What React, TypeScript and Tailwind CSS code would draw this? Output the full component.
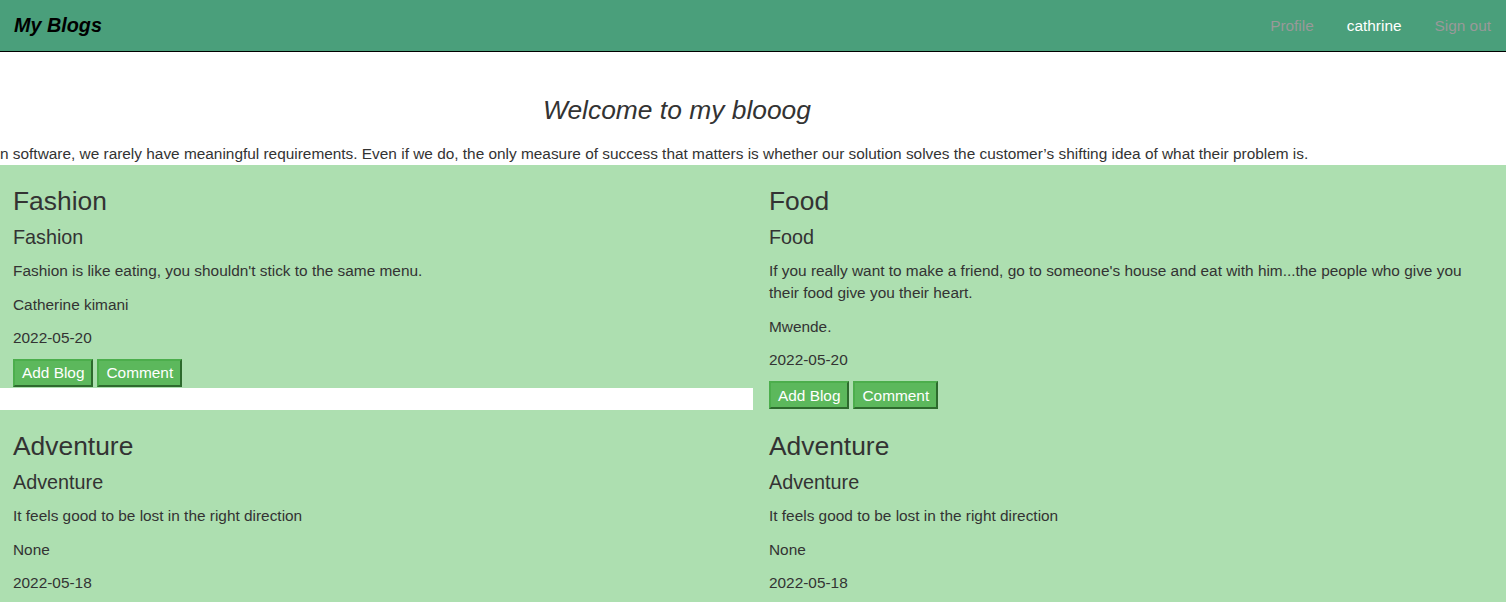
const posts = [
  {
    category: "Fashion",
    title: "Fashion",
    body: "Fashion is like eating, you shouldn't stick to the same menu.",
    author: "Catherine kimani",
    date: "2022-05-20",
  },
  {
    category: "Food",
    title: "Food",
    body: "If you really want to make a friend, go to someone's house and eat with him...the people who give you their food give you their heart.",
    author: "Mwende.",
    date: "2022-05-20",
  },
  {
    category: "Adventure",
    title: "Adventure",
    body: "It feels good to be lost in the right direction",
    author: "None",
    date: "2022-05-18",
  },
  {
    category: "Adventure",
    title: "Adventure",
    body: "It feels good to be lost in the right direction",
    author: "None",
    date: "2022-05-18",
  },
];

function BlogCard({ post, right }: { post: (typeof posts)[number]; right: boolean }) {
  return (
    <div className={`bg-[#addfb0] pt-[22px] self-start ${right ? "pl-[16px] pr-[13px]" : "pl-[13px] pr-[13px]"}`}>
      <h1 className="text-[26.4px] leading-[28.6px] mb-[10px]">{post.category}</h1>
      <h2 className="text-[19.8px] leading-[22px] mb-[12px]">{post.title}</h2>
      <p className="text-[15.4px] leading-[22.5px] mb-[10.5px]">{post.body}</p>
      <p className="text-[15.4px] leading-[23px] mb-[10px]">{post.author}</p>
      <p className="text-[15.4px] leading-[23px] mb-[10px]">{post.date}</p>
      <div className="flex gap-[4px] h-[29px]">
        <button className="h-[28px] px-[7px] bg-[#5cb85c] text-white text-[15.4px] border-2 border-t-[#4cae4c] border-l-[#4cae4c] border-r-[#2d6a2d] border-b-[#2d6a2d]">
          Add Blog
        </button>
        <button className="h-[28px] px-[7px] bg-[#5cb85c] text-white text-[15.4px] border-2 border-t-[#4cae4c] border-l-[#4cae4c] border-r-[#2d6a2d] border-b-[#2d6a2d]">
          Comment
        </button>
      </div>
    </div>
  );
}

export default function App() {
  return (
    <div className="min-h-screen bg-white text-[#333] font-['Liberation_Sans',Arial,sans-serif]">
      <nav className="h-[52px] bg-[#4a9f7b] border-b border-black flex items-center justify-between">
        <a className="pl-[14px] text-[19.8px] font-bold italic text-black">My Blogs</a>
        <ul className="flex gap-[33px] pr-[15px] text-[15.4px]">
          <li className="text-[#999]">Profile</li>
          <li className="text-white">cathrine</li>
          <li className="text-[#999]">Sign out</li>
        </ul>
      </nav>

      <section className="pt-[42px]">
        <h2 className="w-[1354px] text-[26.4px] italic text-center leading-[32px]">Welcome to my blooog</h2>
        <p className="mt-[17px] text-[15.4px] leading-[22px] whitespace-nowrap">
          n software, we rarely have meaningful requirements. Even if we do, the only measure of success that matters is whether our solution solves the customer’s shifting idea of what their problem is.
        </p>
      </section>

      <div className="grid grid-cols-2">
        {posts.map((post, i) => (
          <BlogCard key={i} post={post} right={i % 2 === 1} />
        ))}
      </div>
    </div>
  );
}
